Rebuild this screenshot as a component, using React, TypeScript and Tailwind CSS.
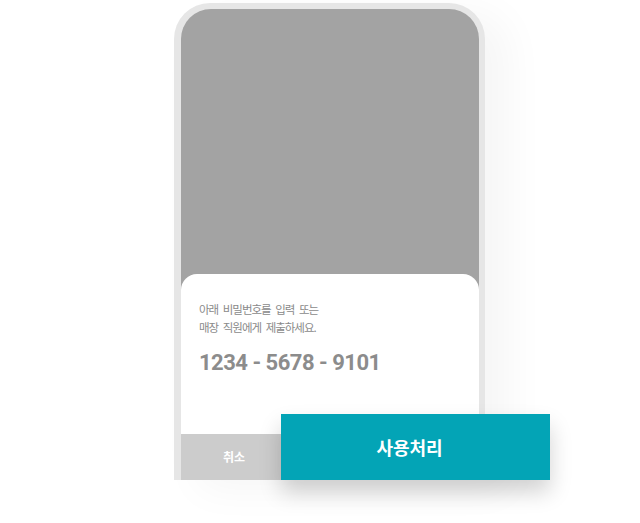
import React from 'react';

const App = () => {
  return (
    <div className="relative w-[640px] h-[523px] bg-white overflow-hidden font-['Noto_Sans_CJK_KR',sans-serif]">
      {/* Phone frame */}
      <div className="ml-[174px] mt-[3px] w-[311px] h-[477px] rounded-t-[36px] bg-[#e6e6e6] pt-[6px] pl-[7px] pr-[6px] shadow-[24px_10px_40px_rgba(0,0,0,0.04)]">
        <div className="flex flex-col h-full rounded-t-[30px] bg-[#a3a3a3] overflow-hidden">
          <div className="h-[265px] shrink-0" />
          <div className="flex-1 bg-white rounded-t-[16px] pt-[26px] pl-[18px]">
            <p className="text-[11.5px] leading-[18px] tracking-[-1px] [word-spacing:3px] text-[#8a8a8a]">
              아래 비밀번호를 입력 또는
              <br />
              매장 직원에게 제출하세요.
            </p>
            <p className="mt-[14px] font-['Roboto',sans-serif] font-bold text-[22px] leading-[26px] tracking-[-0.5px] text-[#8c8c8c]">
              1234 - 5678 - 9101
            </p>
          </div>
          <div className="flex h-[46px] shrink-0 bg-white">
            <div className="w-[100px] bg-[#cccccc] flex items-center justify-center pl-[6px] text-[12px] font-bold text-white">
              취소
            </div>
          </div>
        </div>
      </div>

      {/* Confirm button */}
      <button className="absolute left-[281px] top-[414px] w-[269px] h-[66px] bg-[#03a4b6] flex items-center justify-center pr-[12px] text-[18px] font-bold text-white shadow-[0_12px_22px_rgba(0,0,0,0.18)]">
        사용처리
      </button>
    </div>
  );
};

export default App;
